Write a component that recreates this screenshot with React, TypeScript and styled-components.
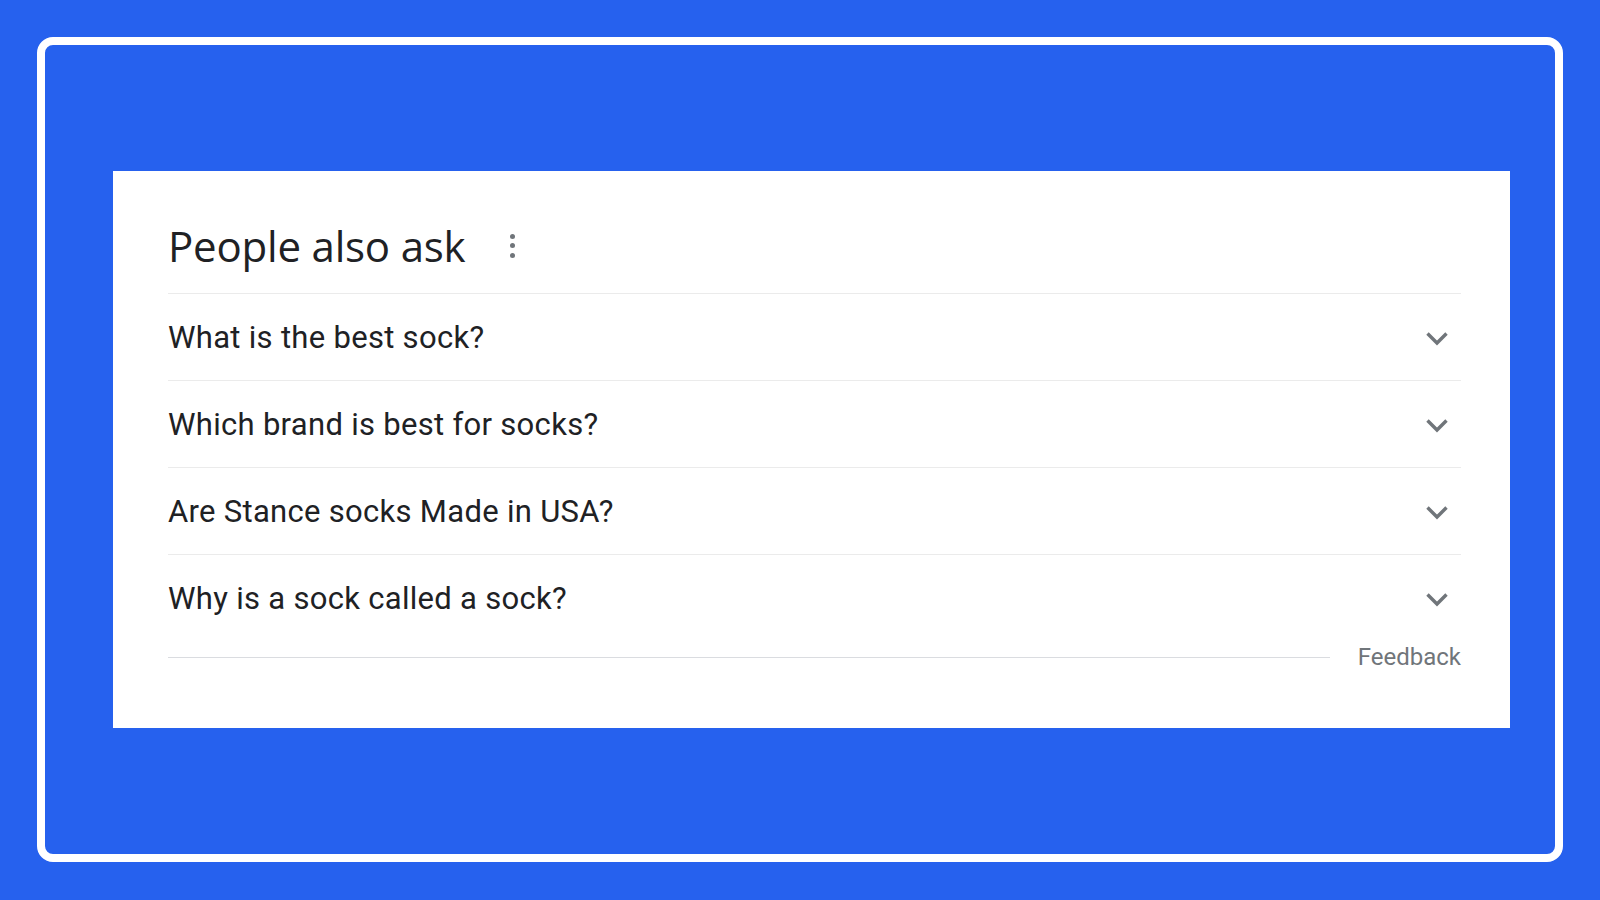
import React from "react";
import styled, { createGlobalStyle } from "styled-components";

const Global = createGlobalStyle`
  html, body { margin: 0; padding: 0; background: #2661ee; }
  body { font-family: Roboto, "Liberation Sans", Arial, sans-serif; }
  * { box-sizing: border-box; }
`;

const Page = styled.div`
  width: 100%;
  height: 900px;
  padding: 37px;
  background: #2661ee;
`;

const Frame = styled.div`
  height: 825px;
  border: 8px solid #ffffff;
  border-radius: 16px;
  display: flex;
  align-items: center;
  padding: 0 45px 0 68px;
`;

const Card = styled.section`
  flex: 1;
  background: #ffffff;
  padding: 51px 49px 55px 55px;
`;

const Header = styled.div`
  display: flex;
  align-items: center;
  gap: 43px;
  padding-bottom: 23px;
`;

const Title = styled.h2`
  margin: 0;
  font-family: "Open Sans", Roboto, sans-serif;
  font-weight: 400;
  font-size: 42px;
  line-height: 48px;
  color: #202124;
  letter-spacing: -0.2px;
`;

const MoreButton = styled.span`
  display: flex;
  flex-direction: column;
  align-items: center;
  gap: 4.5px;
  width: 8px;
  margin-top: -1px;
`;

const Dot = styled.span`
  width: 5px;
  height: 5px;
  border-radius: 50%;
  background: #70757a;
`;

const Row = styled.div`
  display: flex;
  align-items: center;
  justify-content: space-between;
  height: 87px;
  border-top: 1px solid #ebebeb;
  padding: 2px 12px 0 0;
`;

const Question = styled.span`
  font-size: 31px;
  line-height: 36px;
  letter-spacing: 0.3px;
  color: #202124;
`;

const Chevron = styled.svg`
  width: 24px;
  height: 15px;
  display: block;
`;

const Footer = styled.div`
  display: flex;
  align-items: center;
  gap: 28px;
  height: 32px;
`;

const FooterLine = styled.div`
  flex: 1;
  height: 1px;
  background: #dadce0;
`;

const Feedback = styled.span`
  font-size: 24px;
  line-height: 32px;
  color: #70757a;
`;

const questions = [
  "What is the best sock?",
  "Which brand is best for socks?",
  "Are Stance socks Made in USA?",
  "Why is a sock called a sock?",
];

export default function App() {
  return (
    <>
      <Global />
      <Page>
        <Frame>
          <Card>
            <Header>
              <Title>People also ask</Title>
              <MoreButton aria-label="More options">
                <Dot />
                <Dot />
                <Dot />
              </MoreButton>
            </Header>
            {questions.map((q) => (
              <Row key={q}>
                <Question>{q}</Question>
                <Chevron viewBox="0 0 24 15" fill="none">
                  <path
                    d="M2.5 2.5 L12 12 L21.5 2.5"
                    stroke="#70757a"
                    strokeWidth="3.4"
                    strokeLinecap="butt"
                    strokeLinejoin="miter"
                  />
                </Chevron>
              </Row>
            ))}
            <Footer>
              <FooterLine />
              <Feedback>Feedback</Feedback>
            </Footer>
          </Card>
        </Frame>
      </Page>
    </>
  );
}
